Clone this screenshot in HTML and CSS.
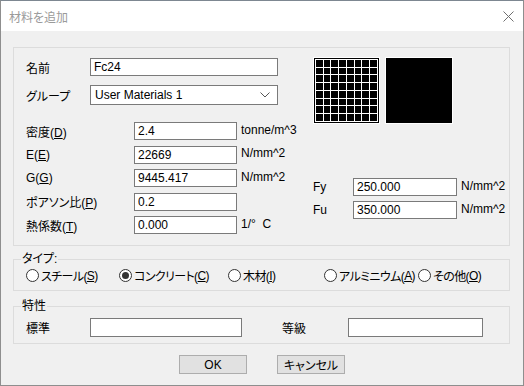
FILE: index.html
```
<!DOCTYPE html>
<html lang="ja">
<head>
  <meta charset="UTF-8">
  <title>材料を追加</title>
  <link rel="stylesheet" href="styles.css">
</head>
<body class="page">
  <div class="window">
    <div class="titlebar">
      <span class="titlebar__title">材料を追加</span>
      <svg class="titlebar__close" width="11" height="11" viewBox="0 0 11 11">
        <path d="M0.5 0.5 L10.5 10.5 M10.5 0.5 L0.5 10.5" stroke="#6f6f6f" stroke-width="1" fill="none"/>
      </svg>
    </div>

    <div class="dialog">
      <div class="group group--main">
        <div class="main__left">
          <div class="line">
            <label class="line__label">名前</label>
            <input class="field field--wide" type="text" value="Fc24">
          </div>
          <div class="line line--select">
            <label class="line__label">グループ</label>
            <div class="select">
              <span>User Materials 1</span>
              <svg class="select__arrow" width="10" height="6" viewBox="0 0 10 6">
                <polyline points="0.5,0.5 5,5 9.5,0.5" stroke="#555" fill="none"/>
              </svg>
            </div>
          </div>
          <div class="props">
            <div class="prop">
              <label class="prop__label">密度(<u>D</u>)</label>
              <input class="field field--num" type="text" value="2.4">
              <span class="prop__unit">tonne/m^3</span>
            </div>
            <div class="prop">
              <label class="prop__label">E(<u>E</u>)</label>
              <input class="field field--num" type="text" value="22669">
              <span class="prop__unit">N/mm^2</span>
            </div>
            <div class="prop">
              <label class="prop__label">G(<u>G</u>)</label>
              <input class="field field--num" type="text" value="9445.417">
              <span class="prop__unit">N/mm^2</span>
            </div>
            <div class="prop">
              <label class="prop__label">ポアソン比(<u>P</u>)</label>
              <input class="field field--num" type="text" value="0.2">
            </div>
            <div class="prop">
              <label class="prop__label">熱係数(<u>T</u>)</label>
              <input class="field field--num" type="text" value="0.000">
              <span class="prop__unit">1/&deg;&nbsp;&nbsp;C</span>
            </div>
          </div>
        </div>

        <div class="main__right">
          <div class="swatches">
            <svg class="swatch" width="67" height="67" viewBox="0 0 67 67">
              <rect x="0" y="0" width="67" height="67" fill="#fff"/>
              <rect x="1" y="1" width="65" height="65" fill="#000"/>
              <g fill="#fff">
                <rect x="2" y="2" width="1" height="63"/><rect x="10" y="2" width="1" height="63"/>
                <rect x="17" y="2" width="1" height="63"/><rect x="25" y="2" width="1" height="63"/>
                <rect x="33" y="2" width="1" height="63"/><rect x="41" y="2" width="1" height="63"/>
                <rect x="48" y="2" width="1" height="63"/><rect x="56" y="2" width="1" height="63"/>
                <rect x="64" y="2" width="1" height="63"/>
                <rect x="2" y="2" width="63" height="1"/><rect x="2" y="10" width="63" height="1"/>
                <rect x="2" y="17" width="63" height="1"/><rect x="2" y="25" width="63" height="1"/>
                <rect x="2" y="33" width="63" height="1"/><rect x="2" y="41" width="63" height="1"/>
                <rect x="2" y="48" width="63" height="1"/><rect x="2" y="56" width="63" height="1"/>
                <rect x="2" y="64" width="63" height="1"/>
              </g>
            </svg>
            <div class="swatch swatch--solid"></div>
          </div>
          <div class="strength">
            <div class="prop">
              <label class="strength__label">Fy</label>
              <input class="field field--strength" type="text" value="250.000">
              <span class="prop__unit">N/mm^2</span>
            </div>
            <div class="prop">
              <label class="strength__label">Fu</label>
              <input class="field field--strength" type="text" value="350.000">
              <span class="prop__unit">N/mm^2</span>
            </div>
          </div>
        </div>
      </div>

      <fieldset class="group group--box">
        <legend class="group__legend">タイプ:</legend>
        <div class="radios">
          <span class="radio"><span class="radio__dot"></span>スチール(<u>S</u>)</span>
          <span class="radio"><span class="radio__dot radio__dot--on"></span>コンクリート(<u>C</u>)</span>
          <span class="radio"><span class="radio__dot"></span>木材(<u>I</u>)</span>
          <span class="radio"><span class="radio__dot"></span>アルミニウム(<u>A</u>)</span>
          <span class="radio"><span class="radio__dot"></span>その他(<u>O</u>)</span>
        </div>
      </fieldset>

      <fieldset class="group group--box">
        <legend class="group__legend">特性</legend>
        <div class="spec">
          <label class="spec__label">標準</label>
          <input class="field field--std" type="text">
          <label class="spec__label spec__label--grade">等級</label>
          <input class="field field--grade" type="text">
        </div>
      </fieldset>

      <div class="buttons">
        <button class="button" type="button">OK</button>
        <button class="button" type="button">キャンセル</button>
      </div>
    </div>
  </div>
</body>
</html>
```

FILE: styles.css
```
*, *::before, *::after {
  box-sizing: border-box;
}

.page {
  margin: 0;
  background: #f0f0f0;
  font-family: "Liberation Sans", "Noto Sans CJK JP", sans-serif;
  font-size: 12px;
  font-feature-settings: "palt";
  color: #000;
}

.window {
  width: 524px;
  height: 386px;
  border: 1px solid #8e8e8e;
  border-top-color: #7d8791;
  background: #f0f0f0;
}

.titlebar {
  height: 30px;
  background: #fff;
  display: flex;
  align-items: center;
  justify-content: space-between;
  padding: 0 9px 0 8px;
}

.titlebar__title {
  color: #9a9a9a;
  font-size: 12px;
}

.titlebar__close {
  display: block;
}

.dialog {
  padding: 16px 13px 0 12px;
}

.group {
  border: 1px solid #dcdcdc;
  margin: 0;
  min-width: 0;
}

.group--main {
  height: 199px;
  display: flex;
  padding: 10px 0 0 12px;
}

.main__left {
  width: 287px;
}

.line {
  display: flex;
  align-items: center;
  height: 18px;
}

.line--select {
  height: 20px;
  margin-top: 9px;
}

.line__label {
  width: 64px;
}

.field {
  height: 18px;
  border: 1px solid #7a7a7a;
  background: #fff;
  padding: 0 3px;
  font: inherit;
  color: #000;
  outline: none;
}

.field--wide {
  width: 188px;
}

.select {
  width: 188px;
  height: 20px;
  border: 1px solid #7a7a7a;
  background: #fff;
  display: flex;
  align-items: center;
  justify-content: space-between;
  padding: 0 7px 0 4px;
}

.select__arrow {
  display: block;
}

.props {
  margin-top: 17px;
  display: flex;
  flex-direction: column;
  gap: 5.5px;
}

.prop {
  display: flex;
  align-items: center;
  height: 18px;
}

.prop__label {
  width: 108px;
}

.field--num {
  width: 103px;
}

.prop__unit {
  margin-left: 4px;
  margin-top: -3px;
  white-space: nowrap;
}

.main__right {
  margin-top: -1px;
}

.swatches {
  display: flex;
  gap: 5px;
}

.swatch {
  display: block;
}

.swatch--solid {
  width: 68px;
  height: 67px;
  background: #000;
  border: 1px solid #fff;
}

.strength {
  margin-top: 54px;
  display: flex;
  flex-direction: column;
  gap: 5px;
}

.strength__label {
  width: 40px;
}

.field--strength {
  width: 104px;
}

.group--box {
  margin-top: 6px;
  padding: 0 0 7px 0;
}

.group--box + .group--box {
  margin-top: 8px;
  padding-bottom: 6px;
}

.group__legend {
  line-height: 15px;
  padding: 0 1px;
  margin-left: 7px;
}

.radios {
  display: grid;
  grid-template-columns: 93px 109px 96px 94px auto;
  align-items: center;
  height: 16px;
  padding-left: 12px;
  letter-spacing: -0.6px;
}

.radio {
  display: flex;
  align-items: center;
  white-space: nowrap;
}

.radio__dot {
  flex: none;
  width: 13px;
  height: 13px;
  border: 1px solid #333;
  border-radius: 50%;
  background: #fff;
  margin-right: 2px;
  display: flex;
  align-items: center;
  justify-content: center;
}

.radio__dot--on::after {
  content: "";
  width: 7px;
  height: 7px;
  border-radius: 50%;
  background: #333;
}

.spec {
  display: flex;
  align-items: center;
  padding: 4px 0 0 12px;
}

.spec__label {
  width: 64px;
}

.spec__label--grade {
  width: 66px;
  margin-left: 40px;
}

.field--std {
  width: 152px;
  height: 19px;
}

.field--grade {
  width: 135px;
  height: 19px;
}

.buttons {
  display: flex;
  justify-content: center;
  gap: 30px;
  margin-top: 11px;
  padding-left: 1px;
}

.button {
  width: 68px;
  height: 19px;
  padding: 0;
  background: #e1e1e1;
  border: 1px solid #adadad;
  font: inherit;
  color: #000;
}
```
